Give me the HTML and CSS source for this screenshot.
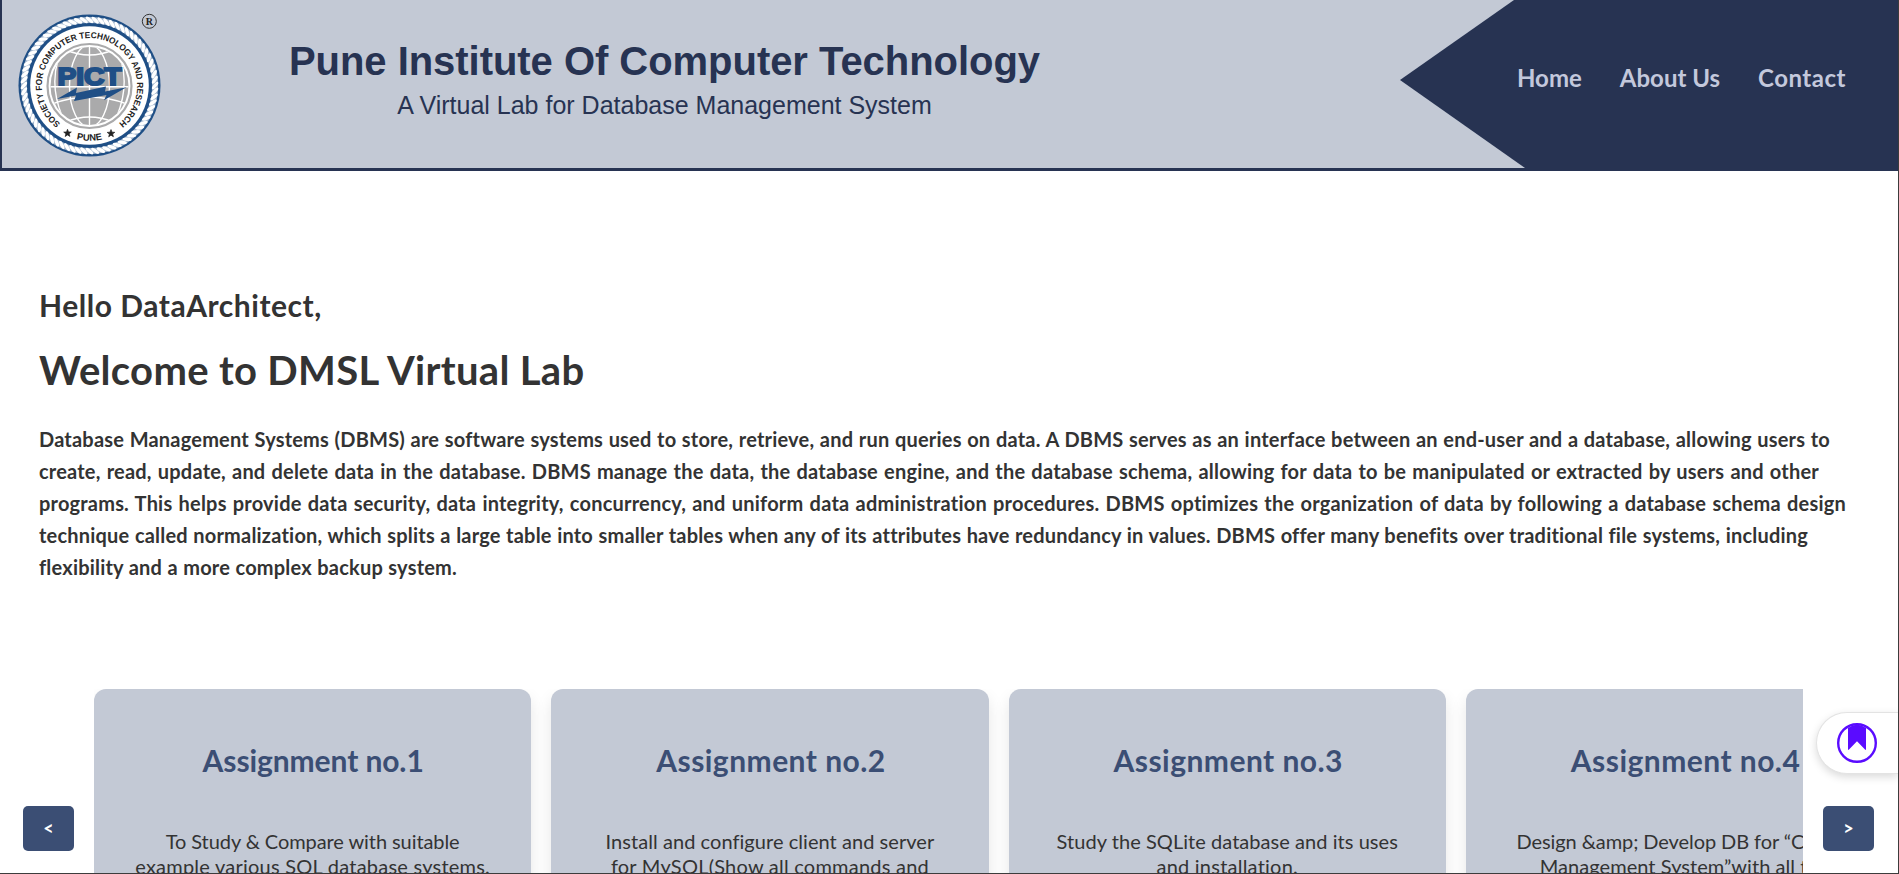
FILE: index.html
```
<!DOCTYPE html>
<html lang="en">
<head>
<meta charset="utf-8">
<title>DMSL Virtual Lab</title>
<link rel="stylesheet" href="styles.css">
</head>
<body>
<div class="page">
  <header class="header">
    <svg class="logo" width="160" height="168" viewBox="2 0 160 168">
      <defs>
        <path id="arc-top" d="M60.500 123.500 A47.6 47.6 0 1 1 118.500 123.500"/>
        <path id="arc-bottom" d="M53 127 A55.4 55.4 0 0 0 126 127"/>
        <clipPath id="globe"><circle cx="89.5" cy="86" r="39"/></clipPath>
      </defs>
      <circle cx="89.5" cy="85.5" r="71" fill="#1f4f86"/>
      <circle cx="89.5" cy="85.5" r="65.6" fill="none" stroke="#9fb4cc" stroke-width="6"/>
      <g class="rope"></g>
      <circle cx="89.5" cy="85.5" r="59.3" fill="#fff"/>
      <circle cx="89.5" cy="86" r="42" fill="none" stroke="#aaaaab" stroke-width="2.2"/>
      <circle cx="89.5" cy="86" r="39" fill="#aaaaab"/>
      <g clip-path="url(#globe)" fill="none" stroke="#fff" stroke-width="1.4">
        <path d="M50 86.7H129M89.5 47V125"/>
        <ellipse cx="89.5" cy="86" rx="20" ry="41"/>
        <path d="M66 50Q89.5 60 113 50M58 60Q50 86 62 116M121 60Q129 86 117 116M52 104Q89.5 90 127 104M66 122Q89.5 112 113 122"/>
      </g>
      <path d="M57 99L77 87.5L76 93L106 86.5L105 91.5L126.500 87.200L104 100.200L106.500 95L74 101L76 95.500Z" fill="#1f4f86"/>
      <text x="57.500" y="84.500" textLength="64" lengthAdjust="spacingAndGlyphs" class="logo-name">PICT</text>
      <text class="logo-ring logo-ring-top"><textPath href="#arc-top" textLength="236" lengthAdjust="spacingAndGlyphs">SOCIETY FOR COMPUTER TECHNOLOGY AND RESEARCH</textPath></text>
      <text class="logo-ring" text-anchor="middle"><textPath href="#arc-bottom" startOffset="50%" textLength="26">PUNE</textPath></text>
      <path id="star" d="M67.500 129.300l1 2.600 2.800 .1-2.200 1.700.8 2.700-2.400-1.500-2.300 1.600.7-2.700-2.200-1.700 2.800-.2z" fill="#222" stroke="#222" stroke-width=".7"/>
      <use href="#star" x="43.500" y=".3"/>
      <circle cx="149.300" cy="21.300" r="7" fill="none" stroke="#333" stroke-width="1"/>
      <text x="149.300" y="24.800" text-anchor="middle" class="logo-reg">R</text>
    </svg>
    <div class="heading">
      <h1 class="heading-title">Pune Institute Of Computer Technology</h1>
      <p class="heading-sub">A Virtual Lab for Database Management System</p>
    </div>
    <nav class="nav">
      <a class="nav-link">Home</a>
      <a class="nav-link">About Us</a>
      <a class="nav-link nav-link-wide">Contact</a>
    </nav>
  </header>

  <main class="intro">
    <h2 class="hello">Hello DataArchitect,</h2>
    <h1 class="welcome">Welcome to DMSL Virtual Lab</h1>
    <p class="about">
      <span class="line w1">Database Management Systems (DBMS) are software systems used to store, retrieve, and run queries on data. A DBMS serves as an interface between an end-user and a database, allowing users to</span>
      <span class="line w2">create, read, update, and delete data in the database. DBMS manage the data, the database engine, and the database schema, allowing for data to be manipulated or extracted by users and other</span>
      <span class="line w3">programs. This helps provide data security, data integrity, concurrency, and uniform data administration procedures. DBMS optimizes the organization of data by following a database schema design</span>
      <span class="line w4">technique called normalization, which splits a large table into smaller tables when any of its attributes have redundancy in values. DBMS offer many benefits over traditional file systems, including</span>
      <span class="line w5">flexibility and a more complex backup system.</span>
    </p>
  </main>

  <section class="carousel">
    <button class="arrow arrow-prev">&lt;</button>
    <div class="track">
      <article class="card">
        <h2 class="card-title card-title-narrow">Assignment no.1</h2>
        <p class="card-text"><span class="tight">To Study &amp; Compare with suitable</span><br><span class="loose">example various SQL database systems.</span></p>
      </article>
      <article class="card">
        <h2 class="card-title">Assignment no.2</h2>
        <p class="card-text">Install and configure client and server<br><span class="loose">for MySQL(Show all commands and</span></p>
      </article>
      <article class="card">
        <h2 class="card-title">Assignment no.3</h2>
        <p class="card-text">Study the SQLite database and its uses<br><span class="loose">and installation.</span></p>
      </article>
      <article class="card">
        <h2 class="card-title">Assignment no.4</h2>
        <p class="card-text"><span class="tight">Design &amp;amp; Develop DB for “Course</span><br>Management System”with all the</p>
      </article>
    </div>
    <button class="arrow arrow-next">&gt;</button>
  </section>

  <aside class="saver">
    <svg width="40" height="40" viewBox="0 0 40 40">
      <circle cx="20" cy="20" r="18.800" fill="#fff" stroke="#5a0cff" stroke-width="2.400"/>
      <path d="M11 5Q20 -1.500 29 5V26.300Q29 27.500 28 26.500L20 18.300L12 26.500Q11 27.500 11 26.300Z" fill="#5a0cff"/>
    </svg>
  </aside>
</div>
<script src="rope.js"></script>
</body>
</html>
```
FILE: styles.css
```
* { box-sizing: border-box; margin: 0; padding: 0; }
body { background: #fff; color: #333; font-family: Lato, sans-serif; overflow: hidden; }
.page {
  position: relative;
  width: 1899px;
  height: 874px;
  overflow: hidden;
  border-right: 1px solid #3c3c3c;
  border-bottom: 1px solid #3c3c3c;
}
.header {
  display: flex;
  height: 171px;
  background: #c3c9d5;
  border-left: 2px solid #273352;
  border-bottom: 3px solid #273352;
}
.logo { flex: none; }
.logo-name { font: 700 24px "Liberation Sans", sans-serif; fill: #1f4f86; stroke: #1f4f86; stroke-width: 2px; }
.logo-ring { font: 700 9.3px "Liberation Sans", sans-serif; fill: #222; }
.logo-ring-top { font-size: 8.8px; }
.logo-reg { font: 700 10px "Liberation Serif", serif; fill: #222; }
.heading {
  width: 1005px;
  padding-top: 38px;
  color: #273352;
  font-family: "Liberation Sans", sans-serif;
  text-align: center;
}
.heading-title { font-size: 40px; line-height: 46px; letter-spacing: -0.04px; }
.heading-sub { margin-top: 7px; font-size: 25px; line-height: 29px; }
.nav {
  display: flex;
  gap: 38px;
  margin-left: auto;
  width: 498px;
  padding: 63px 0 0 117px;
  background: #273352;
  clip-path: polygon(114px 0, 100% 0, 100% 100%, 125px 100%, 0 80px);
}
.nav-link { color: #c3c8dc; font-size: 24px; line-height: 30px; font-weight: 700; }
.nav-link-wide { letter-spacing: 0.5px; }

.intro { padding: 115px 39px 0; }
.hello { font-size: 30px; line-height: 38px; letter-spacing: 0.53px; }
.welcome { margin-top: 21px; font-size: 40px; line-height: 50px; letter-spacing: 0.32px; }
.about { margin-top: 28px; font-size: 20px; line-height: 32px; font-weight: 700; letter-spacing: 0.2px; }
.line { display: block; text-align-last: justify; }
.w1 { width: 1791px; }
.w2 { width: 1780px; }
.w3 { width: 1807px; }
.w4 { width: 1769px; }
.w5 { width: 418px; }

.carousel { display: flex; height: 278px; margin-top: 106px; padding-left: 23px; }
.arrow {
  flex: none;
  height: 45px;
  margin-top: 117px;
  border: 0;
  border-radius: 5px;
  background: #3b4e74;
  color: #fff;
  font: 700 18px/45px Lato, sans-serif;
}
.arrow-prev { width: 51px; }
.arrow-next { width: 51px; margin-left: 20px; }
.track { display: flex; gap: 20px; width: 1709px; margin-left: 20px; overflow: hidden; }
.card {
  flex: none;
  width: 437.3px;
  padding-top: 52px;
  border-radius: 12px;
  background: #c3c9d5;
  box-shadow: 0 8px 16px rgba(0, 0, 0, 0.1);
  text-align: center;
}
.card-title { padding-left: 2px; color: #3b4e74; font-size: 30px; line-height: 38px; letter-spacing: 0.46px; }
.card-title-narrow { padding-left: 1px; letter-spacing: -0.1px; }
.card-text { margin-top: 50px; font-size: 20px; line-height: 25px; letter-spacing: 0.05px; white-space: nowrap; }
.tight { letter-spacing: -0.08px; }
.loose { letter-spacing: 0.23px; }

.saver {
  position: absolute;
  top: 712px;
  right: 0;
  display: flex;
  align-items: center;
  width: 82px;
  height: 62px;
  padding-left: 20px;
  border: 1px solid #e3e3e3;
  border-right: 0;
  border-radius: 31px 0 0 31px;
  background: #fff;
  box-shadow: 0 3px 8px rgba(0, 0, 0, 0.15);
}
```
FILE: rope.js
```
// Twisted strands of the rope border around the emblem.
const rope = document.querySelector('.rope');
for (let i = 0; i < 72; i++) {
  const strand = document.createElementNS('http://www.w3.org/2000/svg', 'ellipse');
  strand.setAttribute('rx', 4.6);
  strand.setAttribute('ry', 1.75);
  strand.setAttribute('fill', '#fff');
  strand.setAttribute('transform', `translate(89.5 85.5) rotate(${i * 5}) translate(0 -65.6) rotate(38)`);
  rope.append(strand);
}
```
